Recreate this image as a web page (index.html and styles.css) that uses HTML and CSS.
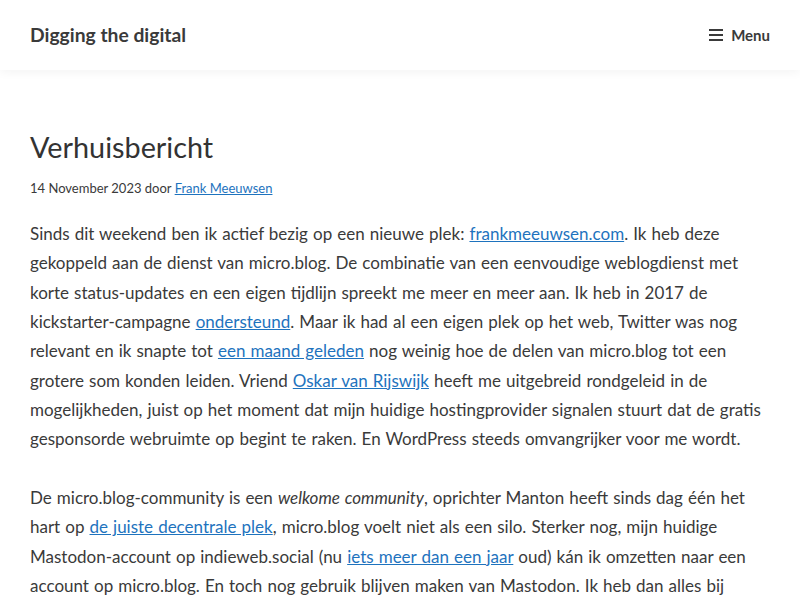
FILE: index.html
```html
<!DOCTYPE html>
<html lang="nl">
<head>
<meta charset="utf-8">
<title>Verhuisbericht – Digging the digital</title>
<link rel="stylesheet" href="styles.css">
</head>
<body>
<header class="site-header">
  <div class="site-title">Digging the digital</div>
  <button class="menu-toggle">
    <svg class="menu-icon" width="14" height="12" viewBox="0 0 14 12" aria-hidden="true">
      <rect x="0" y="0" width="14" height="2"/>
      <rect x="0" y="5" width="14" height="2"/>
      <rect x="0" y="10" width="14" height="2"/>
    </svg>
    <span>Menu</span>
  </button>
</header>
<main class="content">
  <article class="post">
    <h1 class="entry-title">Verhuisbericht</h1>
    <div class="entry-meta">14 November 2023 door <a href="#">Frank Meeuwsen</a></div>
    <div class="entry-content">
      <p>Sinds dit weekend ben ik actief bezig op een nieuwe plek: <a href="#">frankmeeuwsen.com</a>. Ik heb deze gekoppeld aan de dienst van micro.blog. De combinatie van een eenvoudige weblogdienst met korte status-updates en een eigen tijdlijn spreekt me meer en meer aan. Ik heb in 2017 de kickstarter-campagne <a href="#">ondersteund</a>. Maar ik had al een eigen plek op het web, Twitter was nog relevant en ik snapte tot <a href="#">een maand geleden</a> nog weinig hoe de delen van micro.blog tot een grotere som konden leiden. Vriend <a href="#">Oskar van Rijswijk</a> heeft me uitgebreid rondgeleid in de mogelijkheden, juist op het moment dat mijn huidige hostingprovider signalen stuurt dat de gratis gesponsorde webruimte op begint te raken. En WordPress steeds omvangrijker voor me wordt.</p>
      <p>De micro.blog-community is een <em>welkome community</em>, oprichter Manton heeft sinds dag één het hart op <a href="#">de juiste decentrale plek</a>, micro.blog voelt niet als een silo. Sterker nog, mijn huidige Mastodon-account op indieweb.social (nu <a href="#">iets meer dan een jaar</a> oud) kán ik omzetten naar een account op micro.blog. En toch nog gebruik blijven maken van Mastodon. Ik heb dan alles bij elkaar op één plek.</p>
    </div>
  </article>
</main>
</body>
</html>
```
FILE: styles.css
```css
html, body {
  margin: 0;
  padding: 0;
}
body {
  background: #ffffff;
  color: #3a3a3a;
  font-family: "Lato", "Liberation Sans", sans-serif;
  font-size: 17px;
  line-height: 29.3px;
}
a {
  color: #1e73be;
}
.site-header {
  height: 70px;
  padding: 0 30px;
  display: flex;
  align-items: center;
  justify-content: space-between;
  background: #fff;
  box-shadow: 0 2px 10px rgba(0, 0, 0, 0.05);
  position: relative;
  z-index: 1;
}
.site-title {
  font-size: 19.3px;
  font-weight: 700;
  color: #3a3a3a;
  line-height: 1;
  margin-top: -1px;
}
.menu-toggle {
  display: flex;
  align-items: center;
  gap: 8px;
  border: 0;
  background: transparent;
  padding: 0;
  font-family: inherit;
  font-size: 15px;
  font-weight: 700;
  color: #3a3a3a;
  line-height: 1;
}
.menu-icon {
  fill: #3a3a3a;
}
.content {
  padding: 60px 30px 40px;
}
.entry-title {
  margin: 0;
  font-size: 28.8px;
  font-weight: 400;
  line-height: 1.2;
  color: #333;
}
.entry-meta {
  margin-top: 14px;
  font-size: 13px;
  line-height: 1.5;
  color: #3a3a3a;
}
.entry-content {
  margin-top: 21px;
  word-spacing: 0.7px;
}
.entry-content p {
  margin: 0 0 29.5px;
}
```
